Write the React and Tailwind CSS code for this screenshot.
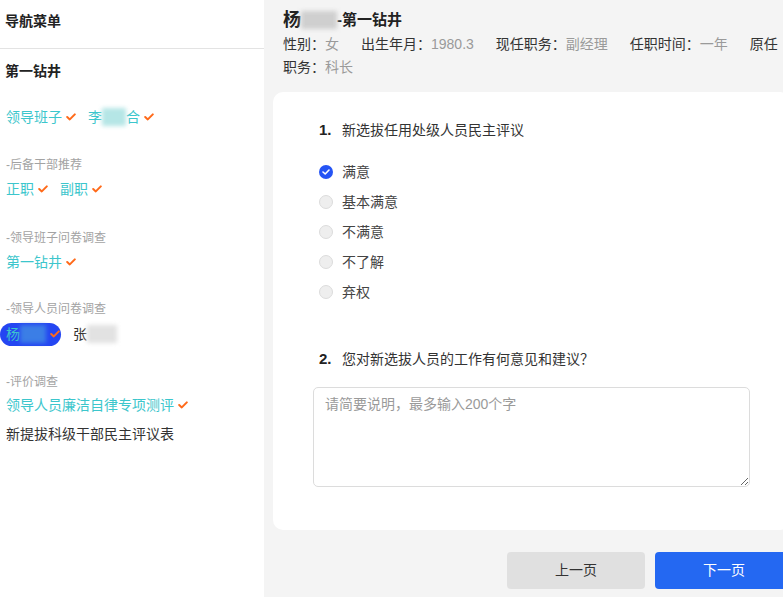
const font = { fontFamily: '"Liberation Sans", "Noto Sans CJK SC", sans-serif' }

// small orange tick after finished items
function Tick() {
  return (
    <svg width="10" height="8" viewBox="0 0 10 8" className="ml-[4px] inline-block">
      <polyline points="1.2,4 3.8,6.4 8.8,1.4" fill="none" stroke="#ff6a1a" strokeWidth="2" strokeLinecap="round" strokeLinejoin="round" />
    </svg>
  )
}

function Blur({ w, color }) {
  return <span className={`inline-block h-[18px] align-middle blur-[2px] ${w} ${color}`}></span>
}

function SectionLabel({ children, className = '' }) {
  return <div className={`pl-[6px] text-[12px] leading-[18px] text-[#a3a3a3] ${className}`}>{children}</div>
}

function Sidebar() {
  return (
    <div className="w-[264px] shrink-0 bg-white">
      <div className="h-[49px] border-b border-[#e3e3e3] pl-[5px] pt-[11px] text-[14px] font-bold leading-[20px] text-[#222]">导航菜单</div>
      <div className="mt-[12px] pl-[5px] text-[14px] font-bold leading-[20px] text-[#222]">第一钻井</div>

      <div className="mt-[26px] flex items-center gap-[12px] pl-[6px] text-[14px] leading-[20px] text-[#3cc6cc]">
        <span className="flex items-center">领导班子<Tick /></span>
        <span className="flex items-center">李<Blur w="w-[24px]" color="bg-[#b5e6e6]" />合<Tick /></span>
      </div>

      <SectionLabel className="mt-[29px]">-后备干部推荐</SectionLabel>
      <div className="mt-[5px] flex items-center gap-[12px] pl-[6px] text-[14px] leading-[20px] text-[#3cc6cc]">
        <span className="flex items-center">正职<Tick /></span>
        <span className="flex items-center">副职<Tick /></span>
      </div>

      <SectionLabel className="mt-[30px]">-领导班子问卷调查</SectionLabel>
      <div className="mt-[5px] flex items-center pl-[6px] text-[14px] leading-[20px] text-[#3cc6cc]">
        第一钻井<Tick />
      </div>

      <SectionLabel className="mt-[28px]">-领导人员问卷调查</SectionLabel>
      <div className="mt-[4px] flex h-[24px] items-center gap-[12px] text-[14px]">
        <span className="flex h-[23px] w-[61px] items-center rounded-full bg-[#2446f2] pl-[6px] text-[#3cc6cc]">
          杨<Blur w="w-[26px]" color="bg-[#3b7ee6]" /><Tick />
        </span>
        <span className="flex items-center text-[#333]">张<Blur w="w-[30px]" color="bg-[#e2e2e2]" /></span>
      </div>

      <SectionLabel className="mt-[27px]">-评价调查</SectionLabel>
      <div className="mt-[4px] flex items-center pl-[6px] text-[14px] leading-[20px] text-[#3cc6cc]">
        领导人员廉洁自律专项测评<Tick />
      </div>
      <div className="mt-[9px] pl-[6px] text-[14px] leading-[20px] text-[#333]">新提拔科级干部民主评议表</div>
    </div>
  )
}

function Info({ label, value, last }) {
  return (
    <span className={last ? '' : 'mr-[22px]'}>
      <span className="text-[#333]">{label}：</span>
      <span className="text-[#9a9a9a]">{value}</span>
    </span>
  )
}

function Radio({ checked, label }) {
  return (
    <div className="flex h-[30px] items-center">
      {checked ? (
        <span className="flex h-[14px] w-[14px] items-center justify-center rounded-full bg-[#2554f5]">
          <svg width="8" height="6" viewBox="0 0 8 6">
            <polyline points="1,3 3.2,5 7,1" fill="none" stroke="#fff" strokeWidth="1.6" strokeLinecap="round" strokeLinejoin="round" />
          </svg>
        </span>
      ) : (
        <span className="h-[14px] w-[14px] rounded-full border border-[#dcdcdc] bg-[#eeeeee]"></span>
      )}
      <span className="ml-[9px] text-[14px] text-[#444]">{label}</span>
    </div>
  )
}

export default function App() {
  const options = ['满意', '基本满意', '不满意', '不了解', '弃权']

  return (
    <div className="flex h-[597px] w-[783px] overflow-hidden" style={font}>
      <Sidebar />

      <div className="w-[540px] shrink-0 bg-[#f4f4f4] pl-[9px]">
        <div className="w-[510px] pl-[10px] pt-[9px]">
          <div className="flex items-center leading-[22px] font-bold text-[#222]">
            <span className="text-[18px]">杨</span>
            <Blur w="w-[36px]" color="bg-[#cfcfcf]" />
            <span className="text-[15px]">-第一钻井</span>
          </div>
          <div className="mt-[2px] text-[14px] leading-[23px]">
            <Info label="性别" value="女" />
            <Info label="出生年月" value="1980.3" />
            <Info label="现任职务" value="副经理" />
            <Info label="任职时间" value="一年" />
            <Info label="原任职务" value="科长" last />
          </div>
        </div>

        <div className="mt-[13px] w-[517px] rounded-[10px] bg-white px-[40px] pb-[43px] pt-[28px]">
          <div className="pl-[6px]">
            <div className="flex h-[20px] items-center text-[14px] text-[#333]">
              <span className="w-[23px] text-[15px] font-bold text-[#222]">1.</span>
              新选拔任用处级人员民主评议
            </div>
            <div className="mt-[17px]">
              {options.map((o, i) => (
                <Radio key={o} label={o} checked={i === 0} />
              ))}
            </div>
            <div className="mt-[42px] flex h-[20px] items-center text-[14px] text-[#333]">
              <span className="w-[23px] text-[15px] font-bold text-[#222]">2.</span>
              您对新选拔人员的工作有何意见和建议？
            </div>
          </div>
          <textarea
            className="mt-[18px] block h-[100px] w-full rounded-[5px] border border-[#dcdcdc] px-[11px] py-[6px] text-[14px] leading-[20px] text-[#333] outline-none placeholder:text-[#9a9a9a]"
            placeholder="请简要说明，最多输入200个字"
          ></textarea>
        </div>

        <div className="mt-[22px] flex w-[520px] justify-end gap-[10px]">
          <button className="h-[37px] w-[138px] rounded-[4px] bg-[#e0e0e0] text-[14px] text-[#333]">上一页</button>
          <button className="h-[37px] w-[138px] rounded-[4px] bg-[#2468f2] text-[14px] text-white">下一页</button>
        </div>
      </div>
    </div>
  )
}
